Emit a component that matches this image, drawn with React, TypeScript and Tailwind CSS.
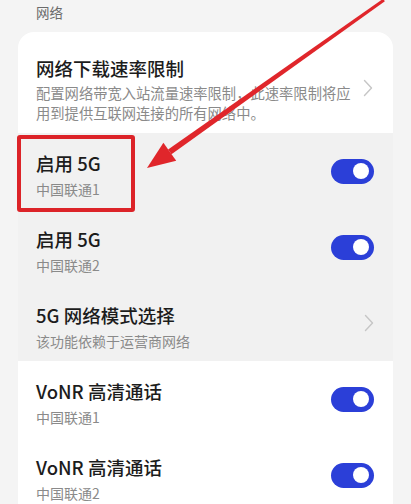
import React from "react";

const font = { fontFamily: '"Noto Sans CJK SC", "Noto Sans", sans-serif' };

function Toggle() {
  return (
    <div className="w-[43px] h-[25px] rounded-full bg-[#2b3fd8] flex items-center justify-end pr-[5px] shrink-0">
      <div className="w-[16px] h-[16px] rounded-full bg-white" />
    </div>
  );
}

function Chevron() {
  return (
    <svg width="10" height="18" viewBox="0 0 10 18" className="shrink-0">
      <path d="M1.5 1.5 L8.5 9 L1.5 16.5" fill="none" stroke="#c6c6c6" strokeWidth="1.4" strokeLinecap="round" strokeLinejoin="round" />
    </svg>
  );
}

function Row({ title, sub, right, bg }: { title: string; sub: string; right: React.ReactNode; bg: string }) {
  return (
    <div className={`flex items-center justify-between h-[76px] pl-[18px] pr-[19px] ${bg}`}>
      <div className="flex flex-col pt-[8px]">
        <div className="text-[18.5px] leading-[24px] font-medium text-[#1c1c1c]">{title}</div>
        <div className="mt-[4px] text-[14px] leading-[20px] text-[#8a8a8a]">{sub}</div>
      </div>
      {right}
    </div>
  );
}

export default function App() {
  return (
    <div className="relative w-[411px] h-[504px] overflow-hidden bg-[#f4f4f4]" style={font}>
      <div className="h-[32px] pl-[36px] pt-[2px] text-[13.5px] leading-[20px] text-[#6b6b6b]">网络</div>
      <div className="mx-[18px] rounded-t-[16px] overflow-hidden">
        <div className="bg-white flex items-start justify-between h-[101px] pl-[18px] pr-[20px] pt-[24px]">
          <div className="flex flex-col">
            <div className="text-[18.5px] leading-[24px] font-medium text-[#1c1c1c]">网络下载速率限制</div>
            <div className="mt-[3px] text-[14.3px] leading-[20px] text-[#8a8a8a] w-[320px]">
              配置网络带宽入站流量速率限制，此速率限制将应用到提供互联网连接的所有网络中。
            </div>
          </div>
          <div className="pt-[23px]">
            <Chevron />
          </div>
        </div>
        <Row title="启用 5G" sub="中国联通1" right={<Toggle />} bg="bg-[#f1f1f1]" />
        <Row title="启用 5G" sub="中国联通2" right={<Toggle />} bg="bg-[#f1f1f1]" />
        <Row title="5G 网络模式选择" sub="该功能依赖于运营商网络" right={<Chevron />} bg="bg-[#f1f1f1]" />
        <Row title="VoNR 高清通话" sub="中国联通1" right={<Toggle />} bg="bg-white" />
        <Row title="VoNR 高清通话" sub="中国联通2" right={<Toggle />} bg="bg-white" />
      </div>

      <div className="absolute left-[17px] top-[135px] w-[118px] h-[77px] border-[4px] border-[#dc2328] rounded-[3px]" />

      <svg className="absolute left-0 top-0" width="411" height="504" viewBox="0 0 411 504">
        <polygon points="171.5,154.2 168.1,149.4 383.1,-1.2 384.9,1.2" fill="#e0262b" />
        <polygon points="147,168 163.4,142.8 176.2,160.8" fill="#e0262b" />
      </svg>
    </div>
  );
}
